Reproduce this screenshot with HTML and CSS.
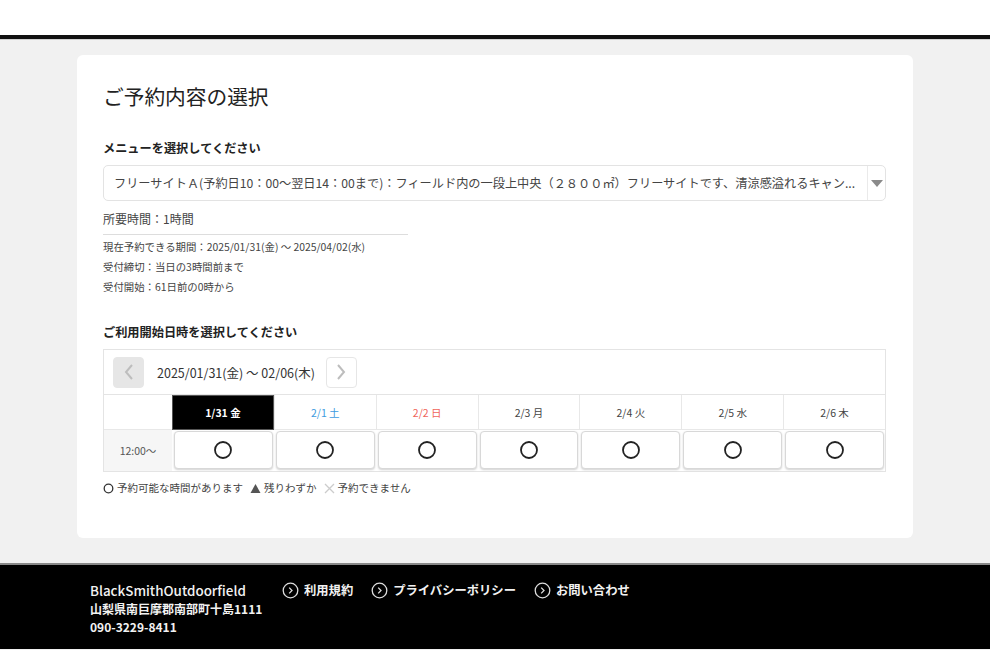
FILE: index.html
```html
<!DOCTYPE html>
<html lang="ja">
<head>
<meta charset="utf-8">
<title>ご予約内容の選択</title>
<link rel="stylesheet" href="styles.css">
</head>
<body>
<header class="site-header"></header>
<main class="main">
  <section class="card">
    <h1 class="title">ご予約内容の選択</h1>
    <h2 class="label">メニューを選択してください</h2>
    <div class="select">
      <div class="select-text">フリーサイトＡ(予約日10：00〜翌日14：00まで)：フィールド内の一段上中央（２８００㎡）フリーサイトです、清涼感溢れるキャン...</div>
      <div class="select-arrow"><span class="tri"></span></div>
    </div>
    <div class="duration">所要時間：1時間</div>
    <ul class="info">
      <li>現在予約できる期間：2025/01/31(金) 〜 2025/04/02(水)</li>
      <li>受付締切：当日の3時間前まで</li>
      <li>受付開始：61日前の0時から</li>
    </ul>
    <h2 class="label label-date">ご利用開始日時を選択してください</h2>
    <div class="calendar">
      <div class="cal-nav">
        <button class="nav-btn nav-prev"><svg width="12" height="18" viewBox="0 0 12 18"><path d="M9 2 L3 9 L9 16" fill="none" stroke="#bdbdbd" stroke-width="2"/></svg></button>
        <span class="range">2025/01/31(金) 〜 02/06(木)</span>
        <button class="nav-btn nav-next"><svg width="12" height="18" viewBox="0 0 12 18"><path d="M3 2 L9 9 L3 16" fill="none" stroke="#bdbdbd" stroke-width="2"/></svg></button>
      </div>
      <div class="cal-grid">
        <div class="hcell blank"></div>
        <div class="hcell selected">1/31 金</div>
        <div class="hcell sat">2/1 土</div>
        <div class="hcell sun">2/2 日</div>
        <div class="hcell">2/3 月</div>
        <div class="hcell">2/4 火</div>
        <div class="hcell">2/5 水</div>
        <div class="hcell">2/6 木</div>
        <div class="tcell">12:00〜</div>
        <div class="scell"><button class="slot"><svg width="20" height="20" viewBox="0 0 20 20"><circle cx="10" cy="10" r="8" fill="none" stroke="#222" stroke-width="1.8"/></svg></button></div>
        <div class="scell"><button class="slot"><svg width="20" height="20" viewBox="0 0 20 20"><circle cx="10" cy="10" r="8" fill="none" stroke="#222" stroke-width="1.8"/></svg></button></div>
        <div class="scell"><button class="slot"><svg width="20" height="20" viewBox="0 0 20 20"><circle cx="10" cy="10" r="8" fill="none" stroke="#222" stroke-width="1.8"/></svg></button></div>
        <div class="scell"><button class="slot"><svg width="20" height="20" viewBox="0 0 20 20"><circle cx="10" cy="10" r="8" fill="none" stroke="#222" stroke-width="1.8"/></svg></button></div>
        <div class="scell"><button class="slot"><svg width="20" height="20" viewBox="0 0 20 20"><circle cx="10" cy="10" r="8" fill="none" stroke="#222" stroke-width="1.8"/></svg></button></div>
        <div class="scell"><button class="slot"><svg width="20" height="20" viewBox="0 0 20 20"><circle cx="10" cy="10" r="8" fill="none" stroke="#222" stroke-width="1.8"/></svg></button></div>
        <div class="scell"><button class="slot"><svg width="20" height="20" viewBox="0 0 20 20"><circle cx="10" cy="10" r="8" fill="none" stroke="#222" stroke-width="1.8"/></svg></button></div>
      </div>
    </div>
    <div class="legend">
      <span class="lg"><svg width="11" height="11" viewBox="0 0 11 11"><circle cx="5.5" cy="5.5" r="4.3" fill="none" stroke="#333" stroke-width="1.3"/></svg>予約可能な時間があります</span>
      <span class="lg"><svg width="11" height="11" viewBox="0 0 11 11"><path d="M5.5 1 L10.5 10 L0.5 10 Z" fill="#555"/></svg>残りわずか</span>
      <span class="lg"><svg width="11" height="11" viewBox="0 0 11 11"><path d="M1 1 L10 10 M10 1 L1 10" stroke="#ccc" stroke-width="1.3"/></svg>予約できません</span>
    </div>
  </section>
</main>
<footer class="site-footer">
  <div class="footer-info">
    <div class="brand">BlackSmithOutdoorfield</div>
    <div>山梨県南巨摩郡南部町十島1111</div>
    <div>090-3229-8411</div>
  </div>
  <nav class="footer-links">
    <a class="flink"><svg width="17" height="17" viewBox="0 0 17 17"><circle cx="8.5" cy="8.5" r="7.3" fill="none" stroke="#ddd" stroke-width="1.3"/><path d="M7.2 5.6 L10 8.5 L7.2 11.4" fill="none" stroke="#ddd" stroke-width="1.3"/></svg>利用規約</a>
    <a class="flink"><svg width="17" height="17" viewBox="0 0 17 17"><circle cx="8.5" cy="8.5" r="7.3" fill="none" stroke="#ddd" stroke-width="1.3"/><path d="M7.2 5.6 L10 8.5 L7.2 11.4" fill="none" stroke="#ddd" stroke-width="1.3"/></svg>プライバシーポリシー</a>
    <a class="flink"><svg width="17" height="17" viewBox="0 0 17 17"><circle cx="8.5" cy="8.5" r="7.3" fill="none" stroke="#ddd" stroke-width="1.3"/><path d="M7.2 5.6 L10 8.5 L7.2 11.4" fill="none" stroke="#ddd" stroke-width="1.3"/></svg>お問い合わせ</a>
  </nav>
</footer>
</body>
</html>
```
FILE: styles.css
```css
* { box-sizing: border-box; }
html, body { margin: 0; padding: 0; }
body {
  font-family: "Noto Sans CJK JP", "Noto Sans", sans-serif;
  color: #333;
  background: #f1f1f1;
  width: 990px;
  height: 650px;
  overflow: hidden;
}
.site-header {
  height: 39px;
  background: #fff;
  border-bottom: 4px solid #111;
  box-shadow: 0 1px 0 #cfcfcf;
}
.main {
  padding: 16px 77px 25px;
}
.card {
  background: #fff;
  border-radius: 6px;
  padding: 26px 27px 26px 26px;
  height: 483px;
}
.title {
  margin: 0;
  font-size: 20.7px;
  font-weight: 400;
  line-height: 30px;
  color: #222;
}
.label {
  margin: 27px 0 0;
  font-size: 12.2px;
  font-weight: 700;
  line-height: 20px;
  color: #222;
}
.select {
  margin-top: 7px;
  height: 36px;
  border: 1px solid #e3e3e3;
  border-radius: 5px;
  display: flex;
  align-items: stretch;
}
.select-text {
  flex: 1;
  min-width: 0;
  padding: 0 8px 0 10px;
  font-size: 12.2px;
  line-height: 34px;
  color: #444;
  white-space: nowrap;
}
.select-arrow {
  width: 18px;
  border-left: 1px solid #eaeaea;
  display: flex;
  align-items: center;
  justify-content: center;
}
.tri {
  width: 0; height: 0;
  border-left: 6px solid transparent;
  border-right: 6px solid transparent;
  border-top: 7px solid #8a8a8a;
}
.duration {
  margin-top: 8px;
  width: 305px;
  font-size: 12px;
  line-height: 20px;
  padding-bottom: 5px;
  border-bottom: 1px solid #ddd;
  color: #444;
}
.info {
  list-style: none;
  margin: 2px 0 0;
  padding: 0;
  font-size: 10.4px;
  color: #444;
}
.info li { line-height: 20px; }
.label-date { margin-top: 25px; }
.calendar {
  margin-top: 7px;
  border: 1px solid #e4e4e4;
}
.cal-nav {
  height: 45px;
  display: flex;
  align-items: center;
  padding-left: 9px;
  border-bottom: 1px solid #e4e4e4;
}
.nav-btn {
  width: 31px;
  height: 31px;
  border-radius: 4px;
  border: 1px solid #e6e6e6;
  background: #fff;
  padding: 0;
  display: flex;
  align-items: center;
  justify-content: center;
}
.nav-prev { background: #e6e6e6; }
.range {
  font-size: 12.5px;
  color: #333;
  margin: 0 11px 0 13px;
}
.cal-grid {
  display: grid;
  grid-template-columns: 68px repeat(7, 1fr);
}
.hcell {
  height: 35px;
  font-size: 10.5px;
  display: flex;
  align-items: center;
  justify-content: center;
  border-left: 1px solid #e8e8e8;
  border-bottom: 1px solid #e8e8e8;
  color: #444;
}
.hcell.blank { border-left: none; }
.hcell.selected {
  background: #000;
  color: #fff;
  font-weight: 700;
  border: 1px solid #555;
}
.hcell.sat { color: #3d9be0; }
.hcell.sun { color: #f0645a; }
.tcell {
  height: 41px;
  background: #f6f6f6;
  font-size: 10.5px;
  color: #555;
  display: flex;
  align-items: center;
  justify-content: center;
}
.scell {
  padding: 1px 1px 2px 2px;
}
.slot {
  width: 100%;
  height: 100%;
  background: #fff;
  border: 1px solid #d8d8d8;
  border-radius: 4px;
  box-shadow: 0 1px 2px rgba(0,0,0,0.18);
  display: flex;
  align-items: center;
  justify-content: center;
  padding: 0;
}
.legend {
  margin-top: 8px;
  display: flex;
  gap: 7px;
  font-size: 10.5px;
  color: #444;
  line-height: 16px;
}
.lg {
  display: inline-flex;
  align-items: center;
  gap: 3px;
}
.site-footer {
  height: 86px;
  background: #000;
  border-top: 2px solid #888;
  padding: 16px 0 0 90px;
  display: flex;
  color: #f2f2f2;
  font-weight: 700;
}
.footer-info {
  font-size: 12px;
  line-height: 18.5px;
  width: 192px;
}
.brand { font-weight: 500; font-size: 13.4px; }
.footer-links {
  display: flex;
  gap: 18px;
  font-size: 12.3px;
  line-height: 18.5px;
}
.flink {
  display: inline-flex;
  align-items: center;
  gap: 5px;
  height: 18.5px;
}
```
